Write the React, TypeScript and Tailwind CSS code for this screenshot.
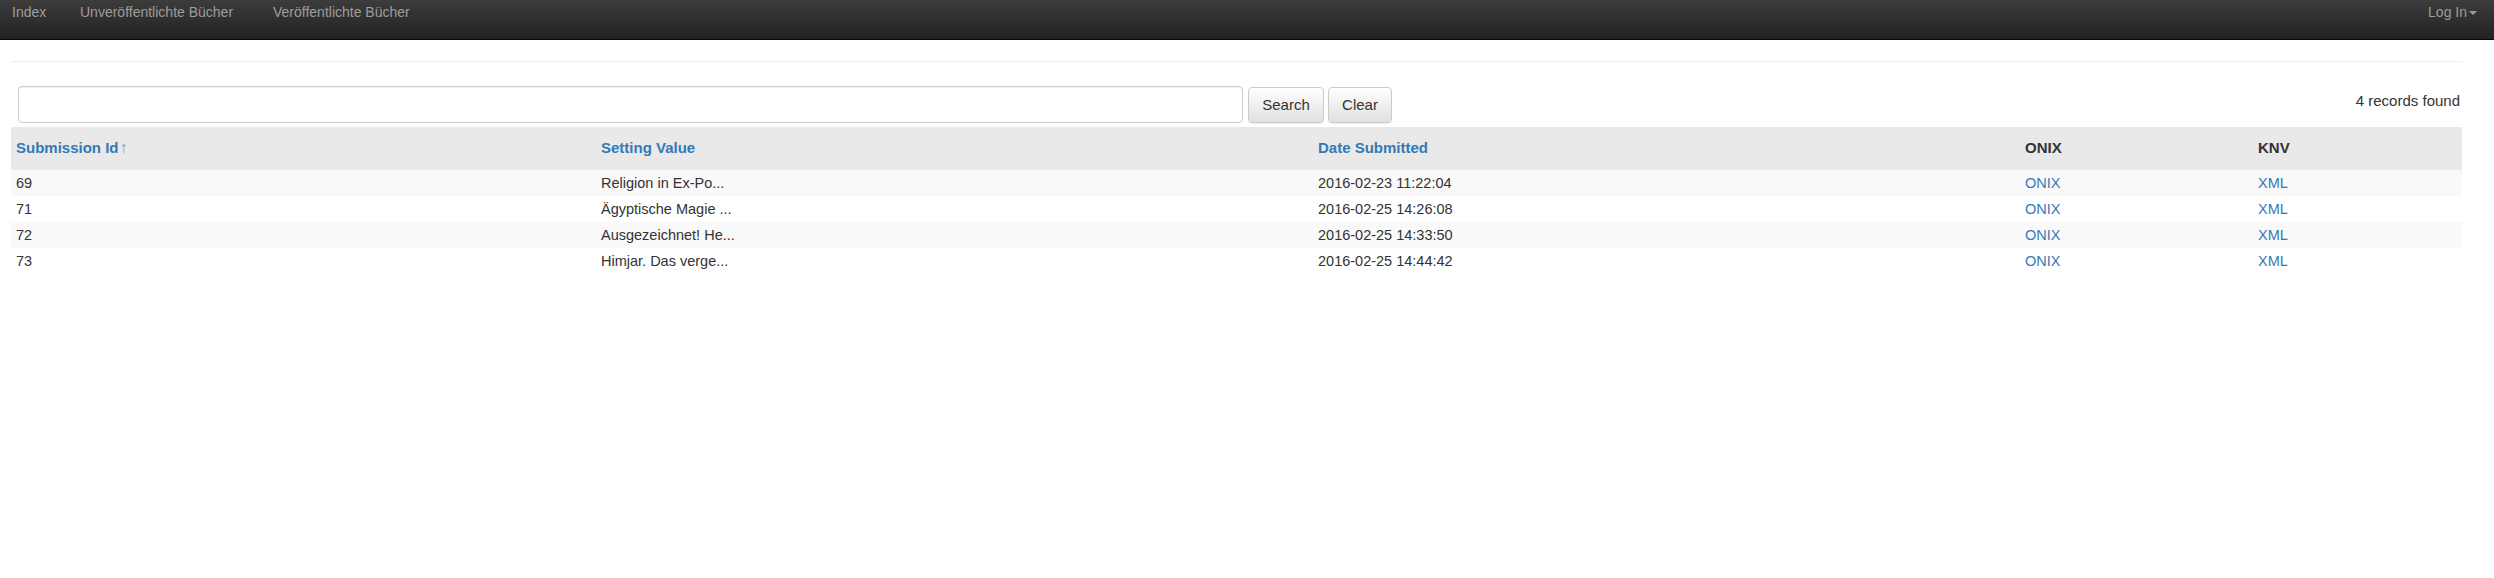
const rows = [
  { id: 69, value: 'Religion in Ex-Po...', date: '2016-02-23 11:22:04' },
  { id: 71, value: 'Ägyptische Magie ...', date: '2016-02-25 14:26:08' },
  { id: 72, value: 'Ausgezeichnet! He...', date: '2016-02-25 14:33:50' },
  { id: 73, value: 'Himjar. Das verge...', date: '2016-02-25 14:44:42' },
]

function Navbar() {
  return (
    <div className="h-[40px] bg-gradient-to-b from-[#3c3c3c] to-[#222222] border-b border-[#080808] flex items-start justify-between text-[14px] leading-[20px] text-[#9d9d9d]">
      <div className="flex pl-[12px] pt-[2px]">
        <a className="w-[68px]">Index</a>
        <a className="w-[193px]">Unveröffentlichte Bücher</a>
        <a>Veröffentlichte Bücher</a>
      </div>
      <div className="flex items-center pr-[17px] pt-[2px]">
        <a>Log In</a>
        <span className="ml-[2px] mt-[1px] w-0 h-0 border-t-[4px] border-t-[#9d9d9d] border-x-[4px] border-x-transparent" />
      </div>
    </div>
  )
}

function SearchBar() {
  return (
    <div className="mt-[24px] pl-[7px] flex items-start justify-between">
      <div className="flex items-start">
        <input
          type="text"
          className="w-[1225px] h-[37px] rounded-[4px] border border-[#cccccc] bg-white px-3 shadow-[inset_0_1px_1px_rgba(0,0,0,0.075)] outline-none"
        />
        <button className="ml-[5px] mt-[1px] h-[36px] w-[76px] rounded-[4px] border border-[#cccccc] bg-gradient-to-b from-white to-[#e0e0e0] text-[15px] leading-[20px] text-[#333] shadow-[0_1px_1px_rgba(0,0,0,0.075)]">
          Search
        </button>
        <button className="ml-[4px] mt-[1px] h-[36px] w-[64px] rounded-[4px] border border-[#cccccc] bg-gradient-to-b from-white to-[#e0e0e0] text-[15px] leading-[20px] text-[#333] shadow-[0_1px_1px_rgba(0,0,0,0.075)]">
          Clear
        </button>
      </div>
      <div className="mt-[5px] pr-[2px] text-[15px] leading-[20px] text-[#333]">4 records found</div>
    </div>
  )
}

function RecordsTable() {
  return (
    <table className="mt-[4px] w-full table-fixed border-collapse text-left">
      <thead>
        <tr className="bg-[#e9e9e9] text-[15px] leading-[20px] font-bold">
          <th className="w-[585px] pl-[5px] pt-[11px] pb-[12px] text-[#337ab7]">
            Submission Id<span className="ml-[1px] font-normal text-[16px] text-[#8f96d8]">↑</span>
          </th>
          <th className="w-[717px] pl-[5px] pt-[11px] pb-[12px] text-[#337ab7]">Setting Value</th>
          <th className="w-[707px] pl-[5px] pt-[11px] pb-[12px] text-[#337ab7]">Date Submitted</th>
          <th className="w-[233px] pl-[5px] pt-[11px] pb-[12px] text-[#333]">ONIX</th>
          <th className="pl-[5px] pt-[11px] pb-[12px] text-[#333]">KNV</th>
        </tr>
      </thead>
      <tbody className="text-[14.5px] leading-[20px] text-[#333]">
        {rows.map((row, i) => (
          <tr key={row.id} className={i % 2 === 0 ? 'bg-[#f9f9f9]' : 'bg-white'}>
            <td className="pl-[5px] py-[3px]">{row.id}</td>
            <td className="pl-[5px] py-[3px]">{row.value}</td>
            <td className="pl-[5px] py-[3px]">{row.date}</td>
            <td className="pl-[5px] py-[3px] text-[#337ab7]">
              <a>ONIX</a>
            </td>
            <td className="pl-[5px] py-[3px] text-[#337ab7]">
              <a>XML</a>
            </td>
          </tr>
        ))}
      </tbody>
    </table>
  )
}

export default function App() {
  return (
    <div className="min-h-[578px] bg-white font-['Liberation_Sans',Arial,sans-serif]">
      <Navbar />
      <div className="pl-[11px] pr-[32px]">
        <div className="pt-[21px] border-b border-[#eeeeee]" />
        <SearchBar />
        <RecordsTable />
      </div>
    </div>
  )
}
